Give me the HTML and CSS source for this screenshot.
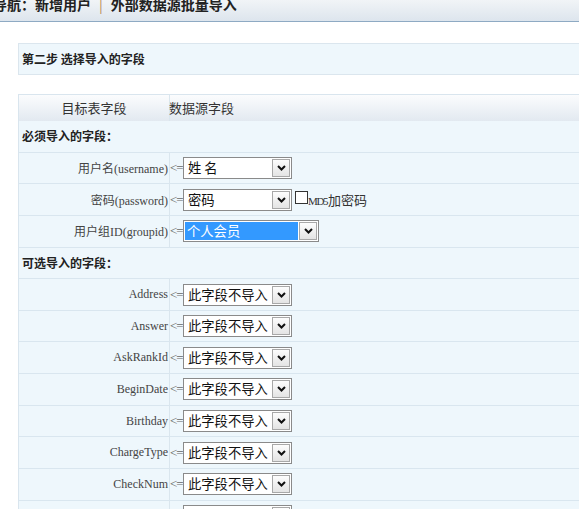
FILE: index.html
```html
<!DOCTYPE html>
<html>
<head>
<meta charset="utf-8">
<link rel="stylesheet" href="styles.css">
</head>
<body>
<div class="nav"><div class="nav-text">导航：新增用户<span class="sep">|</span>外部数据源批量导入</div></div>
<div class="step">第二步 选择导入的字段</div>
<div class="grid">
  <div class="head"><div class="c1">目标表字段</div><div class="c2">数据源字段</div></div>
  <div class="section">必须导入的字段：</div>
  <div class="row"><div class="c1 label">用户名(username)</div><div class="c2"><span class="arrow">&lt;=</span><span class="sel"><span class="val">姓 名</span><span class="btn"><svg width="9" height="6" viewBox="0 0 9 6"><polyline points="1,1 4.5,4.5 8,1" /></svg></span></span></div></div>
  <div class="row"><div class="c1 label">密码(password)</div><div class="c2"><span class="arrow">&lt;=</span><span class="sel"><span class="val">密码</span><span class="btn"><svg width="9" height="6" viewBox="0 0 9 6"><polyline points="1,1 4.5,4.5 8,1" /></svg></span></span><span class="check"></span><span class="md5"><span class="md5-latin">MD5</span>加密码</span></div></div>
  <div class="row"><div class="c1 label">用户组ID(groupid)</div><div class="c2"><span class="arrow">&lt;=</span><span class="sel sel-wide"><span class="val val-hi">个人会员</span><span class="btn"><svg width="9" height="6" viewBox="0 0 9 6"><polyline points="1,1 4.5,4.5 8,1" /></svg></span></span></div></div>
  <div class="section">可选导入的字段：</div>
  <div class="row"><div class="c1 label">Address</div><div class="c2"><span class="arrow">&lt;=</span><span class="sel"><span class="val">此字段不导入</span><span class="btn"><svg width="9" height="6" viewBox="0 0 9 6"><polyline points="1,1 4.5,4.5 8,1" /></svg></span></span></div></div>
  <div class="row"><div class="c1 label">Answer</div><div class="c2"><span class="arrow">&lt;=</span><span class="sel"><span class="val">此字段不导入</span><span class="btn"><svg width="9" height="6" viewBox="0 0 9 6"><polyline points="1,1 4.5,4.5 8,1" /></svg></span></span></div></div>
  <div class="row"><div class="c1 label">AskRankId</div><div class="c2"><span class="arrow">&lt;=</span><span class="sel"><span class="val">此字段不导入</span><span class="btn"><svg width="9" height="6" viewBox="0 0 9 6"><polyline points="1,1 4.5,4.5 8,1" /></svg></span></span></div></div>
  <div class="row"><div class="c1 label">BeginDate</div><div class="c2"><span class="arrow">&lt;=</span><span class="sel"><span class="val">此字段不导入</span><span class="btn"><svg width="9" height="6" viewBox="0 0 9 6"><polyline points="1,1 4.5,4.5 8,1" /></svg></span></span></div></div>
  <div class="row"><div class="c1 label">Birthday</div><div class="c2"><span class="arrow">&lt;=</span><span class="sel"><span class="val">此字段不导入</span><span class="btn"><svg width="9" height="6" viewBox="0 0 9 6"><polyline points="1,1 4.5,4.5 8,1" /></svg></span></span></div></div>
  <div class="row"><div class="c1 label">ChargeType</div><div class="c2"><span class="arrow">&lt;=</span><span class="sel"><span class="val">此字段不导入</span><span class="btn"><svg width="9" height="6" viewBox="0 0 9 6"><polyline points="1,1 4.5,4.5 8,1" /></svg></span></span></div></div>
  <div class="row"><div class="c1 label">CheckNum</div><div class="c2"><span class="arrow">&lt;=</span><span class="sel"><span class="val">此字段不导入</span><span class="btn"><svg width="9" height="6" viewBox="0 0 9 6"><polyline points="1,1 4.5,4.5 8,1" /></svg></span></span></div></div>
  <div class="row"><div class="c1 label">CheckNumType</div><div class="c2"><span class="arrow">&lt;=</span><span class="sel"><span class="val">此字段不导入</span><span class="btn"><svg width="9" height="6" viewBox="0 0 9 6"><polyline points="1,1 4.5,4.5 8,1" /></svg></span></span></div></div>
</div>
</body>
</html>
```

FILE: styles.css
```css
html, body {
  margin: 0;
  padding: 0;
  overflow: hidden;
  background: #fff;
}
body {
  width: 579px;
  height: 509px;
  font-family: "Noto Sans CJK SC", "Noto Sans", sans-serif;
  color: #333;
}
.nav {
  height: 21px;
  border-bottom: 1px solid #8eaac3;
  background: linear-gradient(#f1f4f7, #dde5ed);
  overflow: hidden;
}
.nav-text {
  margin-top: -3px;
  margin-left: -7px;
  font-size: 14px;
  line-height: 14px;
  font-weight: bold;
  color: #222;
  white-space: nowrap;
}
.sep {
  display: inline-block;
  margin: 0 8px 0 8px;
  font-weight: normal;
  color: #b98a52;
}
.step {
  margin: 21px 0 0 18px;
  width: 700px;
  height: 30px;
  border: 1px solid #dbe6ee;
  background: #eef7fc;
  padding-left: 3px;
  font-size: 12px;
  line-height: 30px;
  font-weight: bold;
  color: #222;
}
.grid {
  margin: 19px 0 0 18px;
  width: 700px;
  border-top: 1px solid #d9e5ee;
  border-left: 1px solid #d9e5ee;
}
.head {
  display: flex;
  height: 26px;
  background: linear-gradient(#fbfcfd, #e2e9f0);
  font-size: 13px;
  line-height: 26px;
  color: #333;
}
.head .c1 {
  text-align: center;
}
.head .c2 {
  margin-left: -1px;
}
.c1 {
  box-sizing: border-box;
  width: 151px;
  flex: none;
  border-right: 1px solid #dae6ee;
}
.c2 {
  flex: 1;
  display: flex;
  align-items: center;
}
.section {
  box-sizing: border-box;
  height: 31.65px;
  border-bottom: 1px solid #d9e6ef;
  background: #eef7fc;
  padding-left: 3px;
  font-size: 12px;
  line-height: 30px;
  font-weight: bold;
  color: #222;
}
.row {
  box-sizing: border-box;
  display: flex;
  height: 31.65px;
  border-bottom: 1px solid #d9e6ef;
  background: #eef7fc;
}
.label {
  display: flex;
  align-items: center;
  justify-content: flex-end;
  padding-right: 1px;
  font-family: "Liberation Serif", "Noto Sans CJK SC", serif;
  font-size: 12px;
  color: #444;
}
.arrow {
  font-family: "Liberation Serif", serif;
  font-size: 13px;
  letter-spacing: -1.2px;
  color: #666;
  width: 13px;
  flex: none;
}
.sel {
  box-sizing: border-box;
  display: flex;
  align-items: center;
  width: 109px;
  height: 22px;
  border: 1px solid #8a8a8a;
  background: #fff;
  flex: none;
}
.sel-wide {
  width: 136px;
}
.val {
  flex: 1;
  padding-left: 4px;
  font-size: 13.3px;
  line-height: 18px;
  color: #111;
  white-space: nowrap;
  overflow: hidden;
}
.val-hi {
  margin: 0 1px 0 1px;
  padding-left: 2px;
  height: 18px;
  background: #3399ff;
  color: #fff;
}
.btn {
  box-sizing: border-box;
  display: flex;
  align-items: center;
  justify-content: center;
  width: 18px;
  height: 18px;
  margin-right: 1px;
  border: 1px solid #a8a8a8;
  background: linear-gradient(#fdfdfd, #e4e4e4);
  flex: none;
}
.btn svg polyline {
  fill: none;
  stroke: #111;
  stroke-width: 2;
}
.check {
  box-sizing: border-box;
  width: 13px;
  height: 13px;
  margin: 0 0 5px 3px;
  border: 1px solid #333;
  background: #fff;
  flex: none;
}
.md5 {
  font-size: 13px;
  color: #333;
  white-space: nowrap;
}
.md5-latin {
  font-family: "Liberation Serif", serif;
  font-size: 11px;
  letter-spacing: -1.4px;
  margin-right: 1px;
}
```
